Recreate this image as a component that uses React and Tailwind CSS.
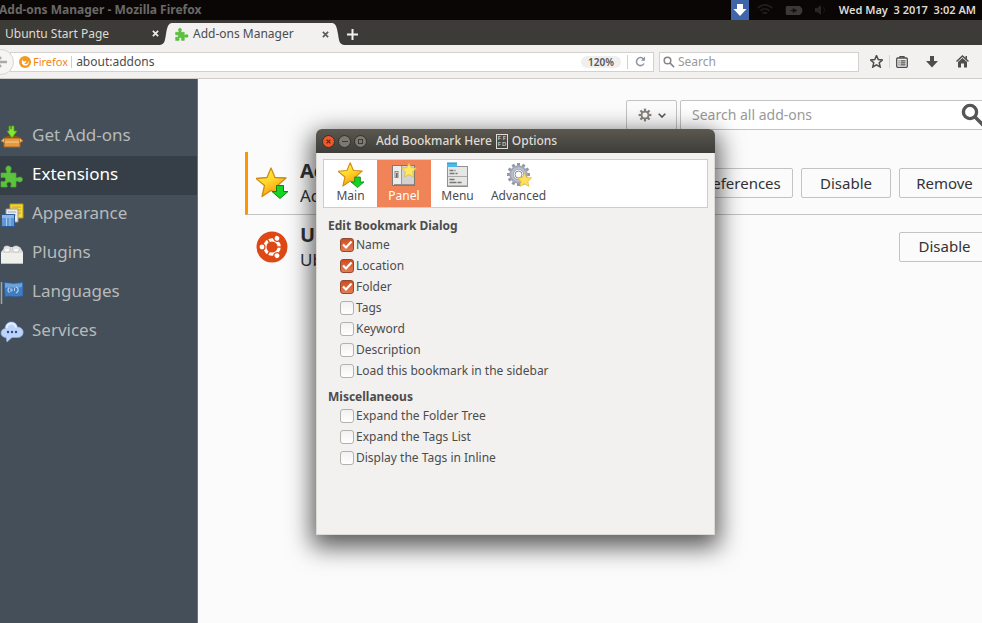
import React from "react";

const PuzzlePath =
  "M1 9h5c1 0 1-1 .5-2C5 4.500 6 2 8.500 2S12 4.500 10.500 7c-.5 1-.5 2 .5 2h5v4c0 1 1 1.200 2 .6 2-1.200 4.500-.4 4.500 1.900s-2.500 3-4.500 1.900c-1-.6-2-.4-2 .6v5h-4.500c-1 0-1-.8-.5-1.600.9-1.600 0-3.400-2-3.400s-2.900 1.800-2 3.400c.5.8.5 1.600-.5 1.600H1v-5c0-1 .8-1 1.600-.5 1.500.8 3-.3 3-2s-1.500-2.800-3-2C1.800 14 1 14 1 13z";
const StarPath = "M12 1l3.200 7.300 7.800.8-5.900 5.300 1.800 7.800L12 18.200l-6.900 4 1.800-7.800L1 9.100l7.800-.8z";

function Puzzle({ className }) {
  return (
    <svg className={className} viewBox="0 0 24 24" aria-hidden="true">
      <path d={PuzzlePath} fill="#5cc33c" stroke="#4aa834" strokeWidth=".7" />
    </svg>
  );
}

function StarDown({ className }) {
  return (
    <svg className={className} viewBox="0 0 32 32" aria-hidden="true">
      <defs>
        <linearGradient id="gold" x1="0" y1="0" x2="0.5" y2="1">
          <stop offset="0" stopColor="#fff45a" />
          <stop offset="0.5" stopColor="#ffdb2c" />
          <stop offset="1" stopColor="#fb9a10" />
        </linearGradient>
      </defs>
      <path d="M15 1l4 9.500 11 .5-8.500 7.500 3 10.500L15 23.500 6 29.500l2.500-11L0 11.500l11-1z" fill="url(#gold)" stroke="#cf8a12" strokeWidth="1.300" strokeLinejoin="round" />
      <path d="M20.500 18.500h7v6H32l-8 7-8-7h4.500z" fill="#16d424" stroke="#08860f" strokeWidth="1" strokeLinejoin="round" />
    </svg>
  );
}

function PanelIcon({ className }) {
  return (
    <svg className={className} viewBox="0 0 26 26" aria-hidden="true">
      <rect x="1.500" y="3.500" width="22" height="20" fill="#d2d2d0" stroke="#807a75" />
      <path d="M2 4h8v19H2z" fill="#ececea" />
      <path d="M10.500 4v19" stroke="#999" />
      <rect x="4" y="9.500" width="3" height="6" fill="#e8e8e8" stroke="#888" />
      <path d="M5 11h1.500v4H5z" fill="#666" />
      <path d="M3 22.500h20" stroke="#96928e" />
      <path d="M18 1l2.200 4.700 5.300.5-3.900 3.600 1 5.200-4.600-2.500-4.600 2.500 1-5.200-3.900-3.600 5.300-.5z" fill="#ffe964" stroke="#e3b83d" strokeWidth=".8" />
    </svg>
  );
}

function MenuIcon({ className }) {
  return (
    <svg className={className} viewBox="0 0 26 26" aria-hidden="true">
      <rect x="2.500" y="4.500" width="20" height="20" fill="#e6e6e5" stroke="#929290" />
      <path d="M2 1h10v4H2z" fill="#4cb9ed" />
      <path d="M2 1h10" stroke="#228dc4" />
      <path d="M4.500 8.500h4m1 0h1M4.500 11.500h5m1 0h2M4.500 17.500h5M4.500 20.500h7m1 0h4" stroke="#777" strokeWidth="1.300" />
      <path d="M3 14.500h19" stroke="#aaa" />
      <path d="M3 24h19" stroke="#8a8a88" />
    </svg>
  );
}

const teeth = [0, 30, 60, 90, 120, 150, 180, 210, 240, 270, 300, 330];

function AdvancedIcon({ className }) {
  return (
    <svg className={className} viewBox="0 0 26 26" aria-hidden="true">
      <g fill="#9298a8">
        {teeth.map((a) => (
          <rect key={a} x="11" y="1" width="3" height="5" transform={`rotate(${a} 12.500 12.500)`} />
        ))}
      </g>
      <circle cx="12.500" cy="12.500" r="7" fill="none" stroke="#a2a8b6" strokeWidth="4.500" />
      <circle cx="12.500" cy="12.500" r="6.500" fill="none" stroke="#bcc1cc" strokeWidth="1.500" />
      <circle cx="12.500" cy="12.500" r="3.500" fill="#fff" stroke="#7f8596" />
      <path d="M18.500 11l2 4.500 5 .5-3.700 3.400 1 4.900-4.300-2.500-4.400 2.500 1-4.900-3.600-3.400 5-.5z" fill="#ffe25a" stroke="#e6b53c" strokeWidth=".8" />
    </svg>
  );
}

function UbuntuLogo({ className }) {
  return (
    <svg className={className} viewBox="0 0 32 32" aria-hidden="true">
      <circle cx="16" cy="16" r="15.500" fill="#dd4814" />
      <circle cx="16" cy="16" r="7.200" fill="none" stroke="#fff" strokeWidth="3.200" />
      {[60, 180, 300].map((a) => (
        <g key={a} transform={`rotate(${a} 16 16)`}>
          <circle cx="26" cy="16" r="3.600" fill="#dd4814" />
          <circle cx="26" cy="16" r="2.400" fill="#fff" />
          <path d="M4 16h8" stroke="#dd4814" strokeWidth="1.400" />
        </g>
      ))}
    </svg>
  );
}

function GetIcon() {
  return (
    <svg className="size-6" viewBox="0 0 24 24" aria-hidden="true">
      <path d="M4 13h16v9H4z" fill="#e39a45" stroke="#a9651c" />
      <path d="M4 13l-3 3 3 1.500M20 13l3 3-3 1.500" fill="#f3bd74" stroke="#b5732a" />
      <path d="M4 13h16l-3-2H7z" fill="#8f5518" />
      <path d="M5 17h14" stroke="#f8cf95" />
      <path d="M9 1h1.500v3h1V1H14v5h3l-5 7-5-7h2z" fill="#86e52f" stroke="#4c9d14" strokeWidth=".7" />
    </svg>
  );
}

function AppearanceIcon() {
  return (
    <svg className="size-6" viewBox="0 0 24 24" aria-hidden="true">
      <path d="M10 1h13v14H10z" fill="#f3d93c" stroke="#b89c17" />
      <path d="M12 4h9M18 7h3M18 10h3" stroke="#c7a51c" />
      <path d="M6 6h12v13H6z" fill="#ececec" stroke="#999" />
      <path d="M8 9h8M14 12h2" stroke="#aaa" />
      <path d="M1.500 11.500h13v12h-13z" fill="#5f96d6" stroke="#2d5b9a" />
      <path d="M2 12h12v3H2z" fill="#8db9e8" />
      <path d="M6.500 15v8M10 15v8" stroke="#a9cbee" />
    </svg>
  );
}

function PluginsIcon() {
  return (
    <svg className="size-6" viewBox="0 0 24 24" aria-hidden="true">
      <path d="M1 10l4-5h15l3 5v12H1z" fill="#dededb" />
      <path d="M1 11h22v11H1z" fill="#efefec" />
      <path d="M1 21.500h22" stroke="#bbb" />
      <path d="M4 9V5.500c0-2 6-2 6 0V9c0 1.500-6 1.500-6 0zM13 9V5.500c0-2 6-2 6 0V9c0 1.500-6 1.500-6 0z" fill="#f8f8f6" stroke="#b7b7b4" strokeWidth=".7" />
      <path d="M5 6h4M14 6h4" stroke="#cfcfcc" />
    </svg>
  );
}

function LanguagesIcon() {
  return (
    <svg className="size-6" viewBox="0 0 24 24" aria-hidden="true">
      <path d="M1.500 1v22" stroke="#a7a7a2" strokeWidth="1.500" />
      <path d="M4 1c5 1 9 2 19 0v14c-10 2-13-1-18 1z" fill="#3f7cc0" stroke="#2b5d9b" strokeWidth=".7" />
      <path d="M5 2c4 0 8 2 17 0v4C14 8 9 5 5 7z" fill="#6ea3da" />
      <path d="M9.500 6.500c-2 1-2 4 0 5M16 6c3 1 3 4 0 6" fill="none" stroke="#b5d0ee" strokeWidth="1.300" />
      <path d="M11 7v4M11 9h2M14.500 7v3" stroke="#b5d0ee" />
    </svg>
  );
}

function ServicesIcon() {
  return (
    <svg className="size-6" viewBox="0 0 24 24" aria-hidden="true">
      <path d="M6 17.500C2.500 17.500 1 15 1 13c0-2.500 2-4.500 4.200-4.300C5 4.500 8 2 11.500 2c3.200 0 5.500 2.200 5.800 5C21 7 23.200 9.500 23.200 12.300c0 3-2.200 5.200-5.200 5.200h-6L7 22z" fill="#bcd3fb" stroke="#8aa9e0" strokeWidth=".7" />
      <path d="M6.500 8C7 5 9 3.500 11.500 3.500S15.500 5 16 7.500" fill="none" stroke="#e6efff" strokeWidth="2" />
      <circle cx="8" cy="12" r="1.200" fill="#284a83" />
      <circle cx="12" cy="12" r="1.200" fill="#284a83" />
      <circle cx="16" cy="12" r="1.200" fill="#284a83" />
    </svg>
  );
}

function Magnifier({ className, width }) {
  return (
    <svg className={className} viewBox="0 0 20 20" fill="none" stroke="currentColor" strokeWidth={width} aria-hidden="true">
      <circle cx="7.500" cy="7.500" r="5.500" />
      <path d="M11.500 11.500l7 7" />
    </svg>
  );
}

function GearIcon({ className }) {
  return (
    <svg className={className} viewBox="0 0 16 16" aria-hidden="true">
      {[0, 45, 90, 135].map((a) => (
        <rect key={a} x="6.700" y="0.700" width="2.600" height="14.600" fill="#85827a" transform={`rotate(${a} 8 8)`} />
      ))}
      <circle cx="8" cy="8" r="3.900" fill="#fbfbfb" stroke="#85827a" strokeWidth="2" />
    </svg>
  );
}

function SystemBar() {
  return (
    <header className="flex h-5 shrink-0 items-center bg-[#0a0606] pr-1.5">
      <h1 className="-ml-px min-w-0 flex-1 truncate text-xs font-bold text-[#6b6966]">Add-ons Manager - Mozilla Firefox</h1>
      <div className="flex items-center">
        <button type="button" aria-label="Downloads" className="flex h-5 w-[18px] items-center justify-center bg-[#3f66a8]">
          <svg className="size-[14px]" viewBox="0 0 14 14" aria-hidden="true">
            <path d="M4 1h6v5h3.500L7 13 .5 6H4z" fill="#fff" />
          </svg>
        </button>
        <svg className="ml-2 h-4 w-4" viewBox="0 0 18 16" fill="none" stroke="#211e1c" strokeWidth="2" aria-hidden="true">
          <path d="M1 6c5-5 11-5 16 0M4 9c3-3 7-3 10 0M6.500 12c2-1.500 3-1.500 5 0" />
        </svg>
        <svg className="ml-3 h-[11px] w-[18px]" viewBox="0 0 18 12" aria-hidden="true">
          <path d="M1.500 1h14L18 4v4l-2.500 3h-14A1.500 1.500 0 0 1 0 9.500v-7A1.500 1.500 0 0 1 1.500 1z" fill="#3b3937" />
          <path d="M5 6h3V4l4 2-4 2V6" fill="#161313" stroke="#161313" />
        </svg>
        <svg className="ml-3 h-3 w-3" viewBox="0 0 12 12" aria-hidden="true">
          <path d="M0 4h2l4-3v10L2 8H0z" fill="#282523" />
          <path d="M8 3c2 2 2 4 0 6" fill="none" stroke="#1d1a18" />
        </svg>
        <time className="ml-3 text-[11px] font-semibold whitespace-pre text-[#dfdbd2]">Wed May  3 2017  3:02 AM</time>
      </div>
    </header>
  );
}

function CloseX({ className }) {
  return (
    <svg className={className} viewBox="0 0 8 8" stroke="currentColor" strokeWidth="2" aria-hidden="true">
      <path d="M1 1l6 6M7 1L1 7" />
    </svg>
  );
}

function TabStrip() {
  return (
    <div role="tablist" className="flex h-[25px] shrink-0 items-end bg-[#3c3b37]">
      <div className="flex h-full w-[168px] items-center justify-between pt-0.5 pr-[9px] pl-[5px]">
        <button type="button" role="tab" aria-selected="false" className="text-xs text-[#dfdbd2]">Ubuntu Start Page</button>
        <button type="button" aria-label="Close Ubuntu Start Page" className="text-[#eeece7]"><CloseX className="size-[7px]" /></button>
      </div>
      <svg className="-ml-2 h-[22px] w-3 shrink-0" viewBox="0 0 12 22" aria-hidden="true">
        <path d="M0 22c5-1 5-5 6-11S8 0 12 0v22z" fill="#f2f1f0" />
      </svg>
      <div className="flex h-[22px] w-[160px] items-center bg-[#f2f1f0] pl-[3px]">
        <Puzzle className="size-[14px]" />
        <button type="button" role="tab" aria-selected="true" className="ml-1 flex-1 text-left text-xs text-[#4c4c4c]">Add-ons Manager</button>
        <button type="button" aria-label="Close Add-ons Manager" className="mr-[3px] text-[#5d5c5a]"><CloseX className="size-[7px]" /></button>
      </div>
      <svg className="h-[22px] w-3 shrink-0" viewBox="0 0 12 22" aria-hidden="true">
        <path d="M0 0c4 0 5 5 6 11s1 10 6 11H0z" fill="#f2f1f0" />
      </svg>
      <button type="button" aria-label="New tab" className="ml-[3px] flex h-[22px] items-center text-[#f2f1f0]">
        <svg className="size-[11px]" viewBox="0 0 11 11" stroke="currentColor" strokeWidth="2" aria-hidden="true">
          <path d="M5.500 0v11M0 5.500h11" />
        </svg>
      </button>
    </div>
  );
}

function NavBar() {
  return (
    <nav aria-label="Navigation" className="flex h-[34px] shrink-0 items-center border-b border-[#cfcdca] bg-[#f2f1f0] pr-[13px]">
      <button type="button" aria-label="Back" className="z-10 -ml-3 flex size-[26px] shrink-0 items-center justify-center rounded-full border border-[#d8d6d3] bg-[#f6f5f4]">
        <svg className="size-3" viewBox="0 0 12 12" fill="none" stroke="#aaa9a7" strokeWidth="2.500" aria-hidden="true">
          <path d="M6 1L1.500 6 6 11M2 6h10" />
        </svg>
      </button>
      <div className="-ml-1 flex h-5 min-w-0 flex-1 items-center border border-[#d3d1ce] bg-white pl-2">
        <svg className="size-3 shrink-0" viewBox="0 0 12 12" aria-hidden="true">
          <circle cx="6" cy="6" r="6" fill="#f59a1f" />
          <path d="M4 2.500c-1 2 0 3 1.500 3l2-.5c-.5 1.500-1 2-2.500 2 2 2 5 .5 4.500-3 1 4-1 6-4 5.500C2.500 9 2 5.500 4 2.500z" fill="#fff" />
        </svg>
        <span className="ml-0.5 border-r border-[#cfcfcf] pr-[3px] text-[11px] leading-3 text-[#f0861b]">Firefox</span>
        <input aria-label="Address" defaultValue="about:addons" className="ml-1 min-w-0 flex-1 bg-transparent text-xs text-[#4c4c4c] outline-none" />
        <button type="button" className="h-3 w-10 rounded-full bg-[#efefef] text-[10px] leading-3 font-semibold text-[#555]">120%</button>
        <button type="button" aria-label="Reload" className="ml-1.5 flex h-3.5 w-[26px] items-center justify-center border-l border-[#d3d1ce]">
          <svg className="size-[11px]" viewBox="0 0 11 11" fill="none" stroke="#8c96a3" strokeWidth="1.500" aria-hidden="true">
            <path d="M9 7.500A4 4 0 1 1 8.500 3" />
            <path d="M10 .5v4.300H5.800z" fill="#8c96a3" stroke="none" />
          </svg>
        </button>
      </div>
      <label className="ml-[5px] flex h-5 w-[200px] shrink-0 items-center gap-[3px] border border-[#d3d1ce] bg-white pl-[3px]">
        <Magnifier className="size-3 text-[#858585]" width="2.500" />
        <input type="search" aria-label="Search" placeholder="Search" className="min-w-0 flex-1 bg-transparent text-xs outline-none placeholder:text-[#999]" />
      </label>
      <div className="ml-[11px] flex items-center text-[#4d4d4d]">
        <button type="button" aria-label="Bookmark this page" className="border-r border-[#d8d6d3] pr-1.5">
          <svg className="size-[13px]" viewBox="0 0 24 24" fill="none" stroke="currentColor" strokeWidth="2.800" aria-hidden="true"><path d={StarPath} /></svg>
        </button>
        <button type="button" aria-label="Bookmarks" className="ml-1.5">
          <svg className="size-3" viewBox="0 0 12 12" fill="none" stroke="currentColor" strokeWidth="1.300" aria-hidden="true">
            <rect x=".7" y="2" width="10.600" height="9.300" rx="1" />
            <path d="M4 2V.7h4V2M2.500 4.800h1M4.500 4.800h5M2.500 6.800h1M4.500 6.800h5M2.500 8.800h1M4.500 8.800h5" />
          </svg>
        </button>
        <button type="button" aria-label="Downloads list" className="ml-[18px]">
          <svg className="size-3" viewBox="0 0 12 12" fill="currentColor" aria-hidden="true"><path d="M4 0h4v5h4l-6 6.500L0 5h4z" /></svg>
        </button>
        <button type="button" aria-label="Home" className="ml-[18px]">
          <svg className="size-[13px]" viewBox="0 0 13 13" aria-hidden="true">
            <path d="M0.500 6.500l6-5.500 6 5.500" fill="none" stroke="currentColor" strokeWidth="1.500" />
            <path d="M9.500 1H11v3.500L9.500 3zM2 7l4.500-4L11 7v5.500H8V8.500H5v4H2z" fill="currentColor" />
          </svg>
        </button>
      </div>
    </nav>
  );
}

const categories = [
  { label: "Get Add-ons", icon: <GetIcon /> },
  { label: "Extensions", icon: <Puzzle className="size-6" />, active: true },
  { label: "Appearance", icon: <AppearanceIcon /> },
  { label: "Plugins", icon: <PluginsIcon /> },
  { label: "Languages", icon: <LanguagesIcon /> },
  { label: "Services", icon: <ServicesIcon /> },
];

function Sidebar() {
  return (
    <aside className="w-[198px] shrink-0 border-r border-[#6c757e] bg-[#444f5a] pt-[38px]">
      {categories.map((c) => (
        <a
          key={c.label}
          href="#"
          className={
            c.active
              ? "flex h-[39px] items-center gap-2 bg-[#363f48] text-[17px] text-white"
              : "flex h-[39px] items-center gap-2 text-[17px] text-[#b8bab9]"
          }
        >
          {c.icon}
          <span className="pb-1">{c.label}</span>
        </a>
      ))}
    </aside>
  );
}

function AddonButton({ children, className }) {
  return (
    <button type="button" className={`h-[30px] shrink-0 rounded-xs border border-[#c3c3c3] bg-[#fbfbfb] text-[15px] text-[#333] ${className}`}>
      {children}
    </button>
  );
}

function AddonRow({ icon, name, description, className, children }) {
  return (
    <li className={`flex h-[63px] items-center border-l-[3px] pr-2 pl-2 ${className}`}>
      {icon}
      <div className="ml-3 min-w-0 flex-1">
        <h2 className="truncate text-xl leading-[25px] font-bold text-[#333]">{name}</h2>
        <p className="truncate text-[17px] leading-[25px] text-[#333]">{description}</p>
      </div>
      <div className="flex gap-2">{children}</div>
    </li>
  );
}

function AddonManager() {
  return (
    <main className="min-w-0 flex-1 overflow-hidden bg-[#fbfbfb] pt-[21px] pl-[47px]">
      <div className="-mr-4">
        <div className="flex justify-end gap-[3px]">
          <button type="button" aria-label="Tools for all add-ons" className="flex h-[30px] w-[51px] items-center justify-center gap-1.5 rounded-xs border border-[#c3c3c3]">
            <GearIcon className="size-[14px]" />
            <svg className="h-[5px] w-2" viewBox="0 0 8 5" fill="none" stroke="#555" strokeWidth="1.600" aria-hidden="true"><path d="M.7.7L4 4 7.300.7" /></svg>
          </button>
          <label className="flex h-[30px] w-[318px] items-center rounded-xs border border-[#c3c3c3] bg-white pr-3 pl-[11px]">
            <input type="search" aria-label="Search all add-ons" placeholder="Search all add-ons" className="min-w-0 flex-1 bg-transparent pb-0.5 text-[14px] outline-none placeholder:text-[#999]" />
            <Magnifier className="size-6 text-[#555]" width="2.800" />
          </label>
        </div>
        <ul className="mt-[22px]">
          <AddonRow
            icon={<StarDown className="size-8 shrink-0" />}
            name="Ad"
            description="Ad"
            className="border-b border-b-[#c3c3c3] border-l-[#ff9500]"
          >
            <AddonButton className="w-[108px]">Preferences</AddonButton>
            <AddonButton className="w-[90px]">Disable</AddonButton>
            <AddonButton className="w-[91px]">Remove</AddonButton>
          </AddonRow>
          <AddonRow
            icon={<UbuntuLogo className="size-8 shrink-0" />}
            name="Ub"
            description="Ub"
            className="border-l-transparent"
          >
            <AddonButton className="w-[91px]">Disable</AddonButton>
          </AddonRow>
        </ul>
      </div>
    </main>
  );
}

function CheckRow({ label, checked }) {
  return (
    <label className="flex h-[21px] items-center gap-0.5 text-xs">
      <span className="grid size-[14px]">
        <input
          type="checkbox"
          defaultChecked={checked}
          className="peer col-start-1 row-start-1 size-[14px] appearance-none rounded-[3px] border border-[#b3b1ae] bg-linear-to-b from-[#f1f1f1] to-white checked:border-[#8f4a31] checked:from-[#cf4d1f] checked:to-[#e47c53]"
        />
        <svg className="pointer-events-none invisible col-start-1 row-start-1 size-[14px] peer-checked:visible" viewBox="0 0 14 14" fill="none" stroke="#fff" strokeWidth="2.200" aria-hidden="true">
          <path d="M3 6.500L6 9.500 11.500 3.500" />
        </svg>
      </span>
      {label}
    </label>
  );
}

const sections = [
  {
    title: "Edit Bookmark Dialog",
    options: [
      ["Name", true],
      ["Location", true],
      ["Folder", true],
      ["Tags", false],
      ["Keyword", false],
      ["Description", false],
      ["Load this bookmark in the sidebar", false],
    ],
  },
  {
    title: "Miscellaneous",
    options: [
      ["Expand the Folder Tree", false],
      ["Expand the Tags List", false],
      ["Display the Tags in Inline", false],
    ],
  },
];

const panes = [
  { label: "Main", icon: <StarDown className="size-[26px]" />, className: "w-[53px]" },
  { label: "Panel", icon: <PanelIcon className="size-[26px]" />, className: "w-[54px] bg-[#f08358] text-white" },
  { label: "Menu", icon: <MenuIcon className="size-[26px]" />, className: "w-[53px]" },
  { label: "Advanced", icon: <AdvancedIcon className="size-[26px]" />, className: "w-[69px]" },
];

const roundButton = "flex size-[13px] items-center justify-center rounded-full border border-[#33322e] ";

function OptionsDialog() {
  return (
    <section
      role="dialog"
      aria-label="Add Bookmark Here Options"
      className="absolute top-[129px] left-[316px] flex h-[406px] w-[399px] flex-col overflow-hidden rounded-t-md bg-[#f2f1f0] text-[#4c4c4c] shadow-[0_8px_24px_4px_rgba(0,0,0,0.65)]"
    >
      <div className="flex h-6 shrink-0 items-center gap-[3px] bg-linear-to-b from-[#5b5850] to-[#3e3d39] pl-1.5">
        <button type="button" aria-label="Close" className={roundButton + "bg-[#ea5a2c] text-[#6a2410]"}>
          <CloseX className="size-[5px]" />
        </button>
        <button type="button" aria-label="Minimize" className={roundButton + "bg-[#7b7970]"}>
          <span className="h-px w-1.5 bg-[#3c3b37]" />
        </button>
        <button type="button" aria-label="Maximize" className={roundButton + "bg-[#7b7970]"}>
          <span className="size-[5px] border border-[#3c3b37]" />
        </button>
        <h2 className="ml-1.5 flex items-center gap-1 text-xs font-medium text-[#dfdbd2]">
          Add Bookmark Here
          <span className="grid h-[15px] w-3 grid-cols-2 place-items-center border border-[#dfdbd2] text-[6px] leading-[6px]">
            <span>F</span>
            <span>F</span>
            <span>F</span>
            <span>D</span>
          </span>
          Options
        </h2>
      </div>
      <div className="min-h-0 flex-1 border border-t-0 border-[#dcdad7] px-1.5 pt-1.5">
        <div role="tablist" className="flex h-[49px] border border-[#cfcdca] bg-white">
          {panes.map((p) => (
            <button key={p.label} type="button" role="tab" aria-selected={p.label === "Panel"} className={`flex flex-col items-center pt-0.5 text-xs leading-4 ${p.className}`}>
              {p.icon}
              {p.label}
            </button>
          ))}
        </div>
        <div className="flex flex-col gap-2 pt-2.5 pl-[5px]">
          {sections.map((s) => (
            <fieldset key={s.title}>
              <legend className="text-xs leading-4 font-bold">{s.title}</legend>
              <div className="pl-3">
                {s.options.map(([label, checked]) => (
                  <CheckRow key={label} label={label} checked={checked} />
                ))}
              </div>
            </fieldset>
          ))}
        </div>
      </div>
    </section>
  );
}

export default function App() {
  return (
    <div className="relative flex min-h-screen flex-col overflow-hidden font-['Noto_Sans',sans-serif]">
      <SystemBar />
      <TabStrip />
      <NavBar />
      <div className="flex flex-1">
        <Sidebar />
        <AddonManager />
      </div>
      <OptionsDialog />
    </div>
  );
}
